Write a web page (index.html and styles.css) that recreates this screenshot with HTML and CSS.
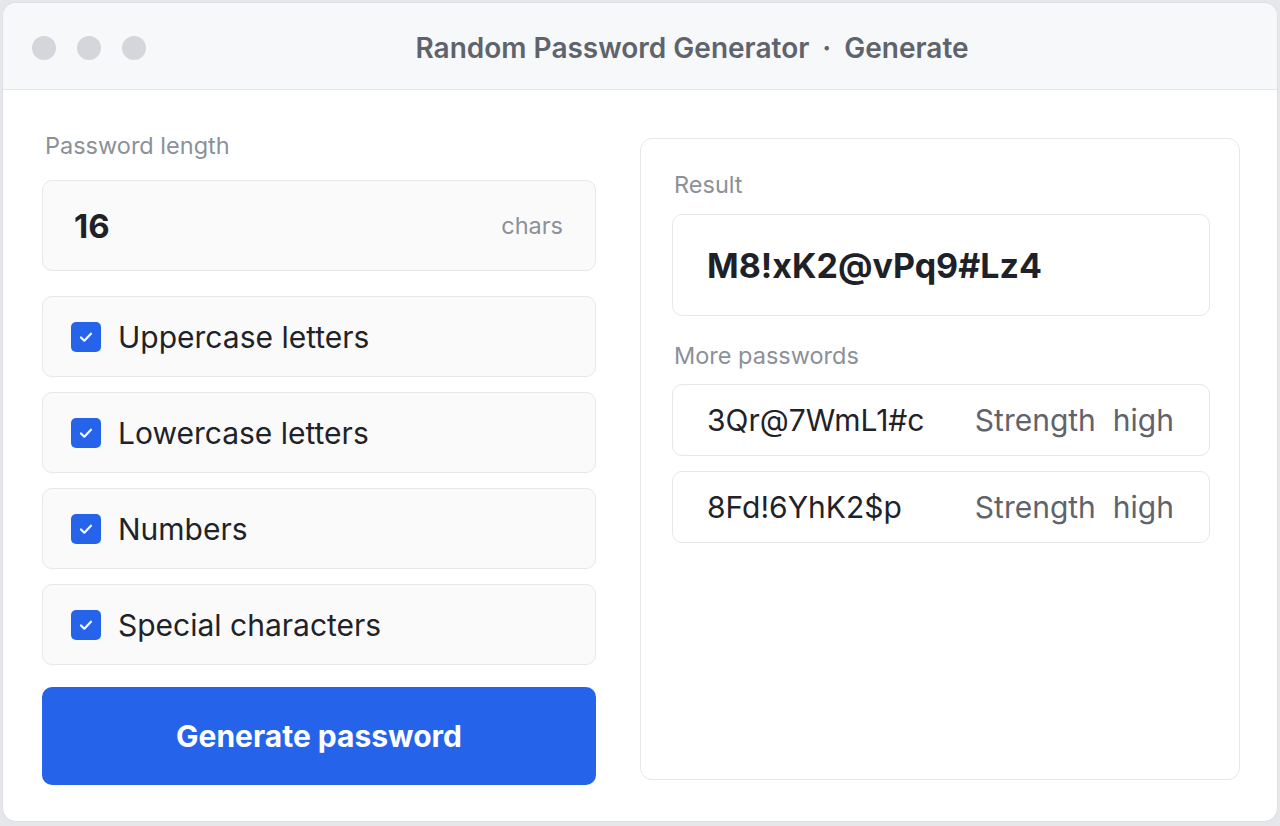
FILE: index.html
```html
<!DOCTYPE html>
<html>
<head>
<meta charset="utf-8">
<link rel="stylesheet" href="styles.css">
</head>
<body>
<div class="window">
  <div class="titlebar">
    <div class="dots"><span class="dot"></span><span class="dot"></span><span class="dot"></span></div>
    <div class="title">Random Password Generator <span class="sep">·</span> Generate</div>
  </div>
  <div class="main">
    <div class="left">
      <div class="label top">Password length</div>
      <div class="length">
        <span class="num">16</span>
        <span class="unit">chars</span>
      </div>
      <div class="options">
        <div class="option"><span class="check"><svg viewBox="0 0 30 30" width="30" height="30"><path d="M10 15.5l3.3 3.2 6.7-7" fill="none" stroke="#fff" stroke-width="2.2" stroke-linecap="round" stroke-linejoin="round"/></svg></span><span>Uppercase letters</span></div>
        <div class="option"><span class="check"><svg viewBox="0 0 30 30" width="30" height="30"><path d="M10 15.5l3.3 3.2 6.7-7" fill="none" stroke="#fff" stroke-width="2.2" stroke-linecap="round" stroke-linejoin="round"/></svg></span><span>Lowercase letters</span></div>
        <div class="option"><span class="check"><svg viewBox="0 0 30 30" width="30" height="30"><path d="M10 15.5l3.3 3.2 6.7-7" fill="none" stroke="#fff" stroke-width="2.2" stroke-linecap="round" stroke-linejoin="round"/></svg></span><span>Numbers</span></div>
        <div class="option"><span class="check"><svg viewBox="0 0 30 30" width="30" height="30"><path d="M10 15.5l3.3 3.2 6.7-7" fill="none" stroke="#fff" stroke-width="2.2" stroke-linecap="round" stroke-linejoin="round"/></svg></span><span>Special characters</span></div>
      </div>
      <button class="generate">Generate password</button>
    </div>
    <div class="panel">
      <div class="label">Result</div>
      <div class="result">M8!xK2@vPq9#Lz4</div>
      <div class="label more">More passwords</div>
      <div class="list">
        <div class="row"><span class="pw">3Qr@7WmL1#c</span><span class="strength"><span>Strength</span><span>high</span></span></div>
        <div class="row"><span class="pw">8Fd!6YhK2$p</span><span class="strength"><span>Strength</span><span>high</span></span></div>
      </div>
    </div>
  </div>
</div>
</body>
</html>
```
FILE: styles.css
```css
* { box-sizing: border-box; }
html, body { margin: 0; padding: 0; }
body {
  background: #e6e7eb;
  font-family: Inter, "Noto Sans", sans-serif;
  width: 1280px;
  height: 826px;
  padding: 2px;
}
.window {
  width: 1276px;
  height: 820px;
  background: #ffffff;
  border: 1px solid #dcdee3;
  border-radius: 14px;
  overflow: hidden;
}
.titlebar {
  height: 87px;
  background: #f7f8fa;
  border-bottom: 1px solid #e5e7eb;
  display: flex;
  align-items: center;
  position: relative;
}
.dots {
  display: flex;
  gap: 21px;
  padding-left: 29px;
  padding-top: 4px;
}
.dot {
  width: 24px;
  height: 24px;
  border-radius: 50%;
  background: #d4d6db;
}
.title {
  position: absolute;
  left: 0;
  right: 0;
  top: 0;
  bottom: 0;
  display: flex;
  align-items: center;
  justify-content: center;
  padding-top: 3px;
  padding-left: 104px;
  font-size: 28px;
  font-weight: 600;
  color: #5f636c;
  pointer-events: none;
}
.sep { margin: 0 13px; }
.main {
  display: grid;
  grid-template-columns: 554px 600px;
  column-gap: 44px;
  align-items: start;
  padding: 48px 37px 0 39px;
}
.left { display: flex; flex-direction: column; }
.label {
  font-size: 23.5px;
  line-height: 28px;
  color: #8b9099;
  padding-left: 2px;
}
.label.top {
  line-height: 16px;
  margin-bottom: 26px;
  padding-left: 3px;
}
.length {
  height: 91px;
  background: #fafafa;
  border: 1px solid #e5e7eb;
  border-radius: 10px;
  display: flex;
  align-items: center;
  justify-content: space-between;
  padding: 0 32px 0 31px;
}
.num { font-size: 33px; font-weight: 700; color: #1e2228; }
.unit { font-size: 23.5px; color: #8b9099; }
.options {
  display: flex;
  flex-direction: column;
  gap: 15px;
  margin-top: 25px;
}
.option {
  height: 81px;
  background: #fafafa;
  border: 1px solid #e5e7eb;
  border-radius: 10px;
  display: flex;
  align-items: center;
  gap: 17px;
  padding-left: 28px;
  font-size: 30px;
  color: #1f2329;
}
.check {
  width: 30px;
  height: 30px;
  border-radius: 5px;
  background: #2563eb;
  display: flex;
  flex-shrink: 0;
}
.generate {
  margin-top: 22px;
  height: 98px;
  border: none;
  border-radius: 10px;
  background: #2563eb;
  color: #ffffff;
  font-family: Inter, "Noto Sans", sans-serif;
  font-size: 30px;
  font-weight: 700;
}
.panel {
  height: 642px;
  border: 1px solid #e5e7eb;
  border-radius: 12px;
  padding: 32px 29px 0 31px;
}
.panel .label { margin-bottom: 15px; }
.result {
  height: 102px;
  border: 1px solid #e5e7eb;
  border-radius: 10px;
  display: flex;
  align-items: center;
  padding-left: 34px;
  font-size: 34px;
  font-weight: 700;
  color: #1e2228;
}
.panel .label.more { margin-top: 26px; margin-bottom: 14px; }
.list { display: flex; flex-direction: column; gap: 15px; }
.row {
  height: 72px;
  border: 1px solid #e5e7eb;
  border-radius: 10px;
  display: flex;
  align-items: center;
  justify-content: space-between;
  padding: 0 35px 0 34px;
  font-size: 30px;
}
.pw { color: #1f2329; }
.strength { display: flex; gap: 17px; color: #5f636c; }
```
